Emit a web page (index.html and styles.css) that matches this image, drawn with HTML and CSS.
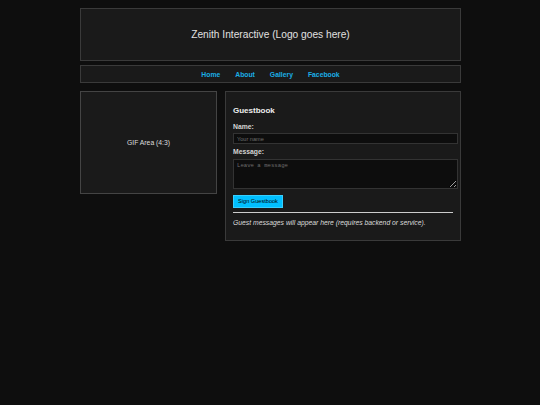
FILE: index.html
```html
<!DOCTYPE html>
<html lang="en">
<head>
<meta charset="utf-8">
<title>Zenith Interactive</title>
<link rel="stylesheet" href="styles.css">
</head>
<body>
<div class="page">
  <header class="site-header">Zenith Interactive (Logo goes here)</header>
  <nav class="site-nav">
    <a href="#">Home</a>
    <a href="#">About</a>
    <a href="#">Gallery</a>
    <a href="#">Facebook</a>
  </nav>
  <main class="main">
    <div class="gif-area">GIF Area (4:3)</div>
    <section class="guestbook">
      <h3 class="gb-title">Guestbook</h3>
      <label class="gb-label" for="gname">Name:</label>
      <input class="gb-input" id="gname" type="text" placeholder="Your name">
      <label class="gb-label gb-label-msg" for="gmsg">Message:</label>
      <textarea class="gb-textarea" id="gmsg" placeholder="Leave a message"></textarea>
      <button class="gb-button" type="button">Sign Guestbook</button>
      <hr class="gb-rule">
      <p class="gb-note">Guest messages will appear here (requires backend or service).</p>
    </section>
  </main>
</div>
</body>
</html>
```
FILE: styles.css
```css
html, body {
  margin: 0;
  padding: 0;
  background: #0e0e0e;
}
body {
  font-family: "Liberation Sans", Arial, sans-serif;
  font-size: 6.8px;
  color: #dddddd;
}
.page {
  width: 381px;
  margin: 8px 0 0 80px;
}
.site-header {
  box-sizing: border-box;
  height: 53px;
  background: #1a1a1a;
  border: 1px solid #3a3a3a;
  display: flex;
  align-items: center;
  justify-content: center;
  font-size: 10.2px;
  color: #e0e0e0;
}
.site-nav {
  box-sizing: border-box;
  margin-top: 4px;
  height: 18px;
  background: #1a1a1a;
  border: 1px solid #3a3a3a;
  display: flex;
  align-items: center;
  justify-content: center;
  gap: 15px;
}
.site-nav a {
  color: #1aaee6;
  font-weight: bold;
  font-size: 6.8px;
  text-decoration: none;
}
.main {
  margin-top: 8px;
  display: flex;
  align-items: flex-start;
  gap: 8px;
}
.gif-area {
  box-sizing: border-box;
  width: 137px;
  height: 103px;
  flex: none;
  background: #1a1a1a;
  border: 1px solid #444444;
  display: flex;
  align-items: center;
  justify-content: center;
  color: #dddddd;
}
.guestbook {
  flex: 1;
  min-width: 0;
  box-sizing: border-box;
  background: #1a1a1a;
  border: 1px solid #3a3a3a;
  padding: 7px 7px 7px;
  display: flex;
  flex-direction: column;
  align-items: flex-start;
}
.gb-title {
  margin: 7px 0 7.5px;
  font-size: 8px;
  line-height: 9px;
  font-weight: bold;
  color: #eeeeee;
}
.gb-label {
  display: block;
  font-weight: bold;
  line-height: 8px;
  color: #d4d4d4;
}
.gb-label-msg {
  margin-top: 3.5px;
}
.gb-input {
  box-sizing: border-box;
  flex: none;
  margin: 2.5px 0 0;
  width: 225px;
  height: 11px;
  padding: 0 3px;
  background: #0d0d0d;
  border: 1px solid #333333;
  color: #dddddd;
  font-family: "Liberation Sans", Arial, sans-serif;
  font-size: 5.6px;
  outline: none;
}
.gb-input::placeholder {
  color: #6e6e6e;
}
.gb-textarea {
  box-sizing: border-box;
  flex: none;
  margin: 3px 0 0;
  width: 225px;
  height: 30px;
  padding: 2px 3px;
  background: #0d0d0d;
  border: 1px solid #333333;
  color: #dddddd;
  font-family: "Liberation Mono", "DejaVu Sans Mono", monospace;
  font-size: 5.67px;
  outline: none;
}
.gb-textarea::placeholder {
  color: #6e6e6e;
}
.gb-button {
  box-sizing: border-box;
  margin-top: 6px;
  height: 13px;
  width: 50px;
  padding: 0;
  background: #00bfff;
  border: 1px solid #36cfff;
  color: #000000;
  font-family: "Liberation Sans", Arial, sans-serif;
  font-size: 5.6px;
}
.gb-rule {
  align-self: stretch;
  margin: 4px 0 0;
  height: 0;
  border: 0;
  border-top: 1px solid #cccccc;
}
.gb-note {
  margin: 6px 0 6px;
  line-height: 8px;
  font-style: italic;
  color: #dddddd;
}
```
